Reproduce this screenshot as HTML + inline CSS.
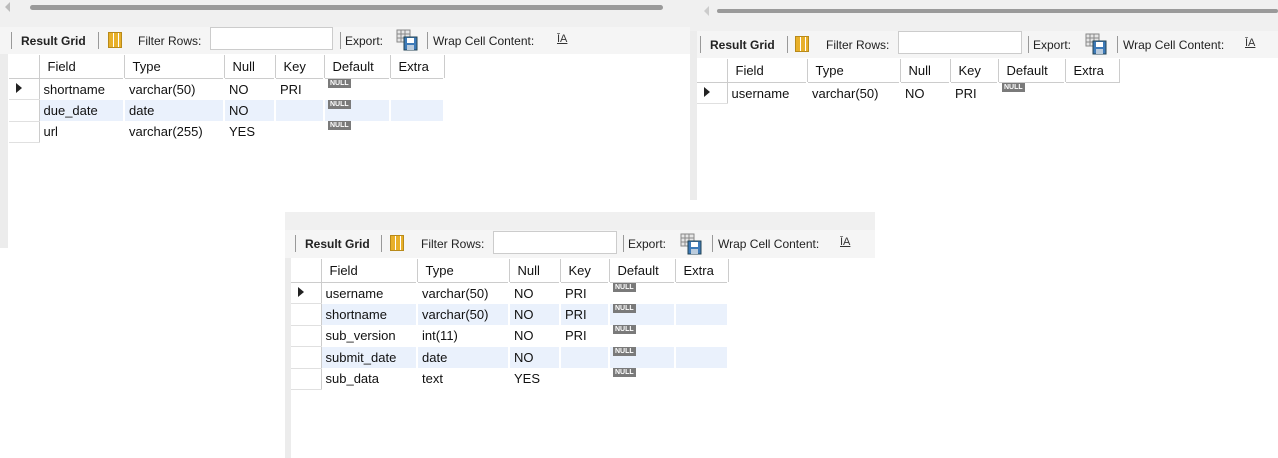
<!DOCTYPE html>
<html><head><meta charset="utf-8"><style>
*{margin:0;padding:0;box-sizing:border-box}
body{width:1278px;height:458px;background:#fff;position:relative;overflow:hidden;font-family:"Liberation Sans",sans-serif;color:#111}
.p{position:absolute;background:#fff}
.strip{position:absolute;left:0;top:0;bottom:0;background:#ececec}
.top{position:absolute;left:0;right:0;top:0;background:#f0f0f0}
.tb{position:absolute;left:0;right:0;background:#f5f5f5;font-size:12px;color:#222}
.tb span{position:absolute;white-space:nowrap}
.sep{position:absolute;width:1px;height:17px;background:#999}
.fin{position:absolute;height:23px;background:#fff;border:1px solid #ccc}
.g{position:absolute;border-collapse:collapse;font-size:13px;table-layout:fixed}
.g td{height:21.5px;padding:0 0 0 4px;white-space:nowrap;border-right:2px solid #fff;vertical-align:middle;position:relative}
.g tr.h td{height:23px;border-right:1px solid #ccc;border-bottom:1px solid #ccc;padding-left:8px}
.g td.rh{border-right:1px solid #ccc;border-bottom:1px solid #e0e0e0;padding:0}
.g tr.alt td{background:#eaf1fc}
.g tr.alt td.rh{background:#fff}
.nl{position:absolute;left:3px;top:0px;background:#7a7a7a;color:#fff;font-size:7px;font-weight:bold;padding:0 2px;line-height:9px}
.arr{display:inline-block;margin-left:7px;width:0;height:0;border-left:6px solid #222;border-top:5px solid transparent;border-bottom:5px solid transparent}
.sb{position:absolute;height:5px;background:#9a9a9a;border-radius:3px}
.ico{position:absolute;width:14px;height:16px;background:repeating-linear-gradient(90deg,#e8b02a 0 4px,#fff 4px 5px);border:1px solid #b88a1a}
.ex{position:absolute;width:22px;height:22px}
</style></head><body>

<!-- Panel 1 -->
<div class="p" style="left:0;top:0;width:690px;height:248px">
 <div class="top" style="height:28px"></div>
 <div style="position:absolute;left:5px;top:2px;width:0;height:0;border-right:5px solid #bbb;border-top:5px solid transparent;border-bottom:5px solid transparent"></div>
 <div class="sb" style="left:30px;top:5px;width:633px"></div>
 <div class="tb" style="top:27px;height:27px">
  <div class="sep" style="left:11px;top:5px"></div>
  <span style="left:21px;top:7px;font-weight:bold">Result Grid</span>
  <div class="sep" style="left:98px;top:5px"></div>
  <div class="ico" style="left:108px;top:5px"></div>
  <span style="left:138px;top:7px">Filter Rows:</span>
  <div class="fin" style="left:210px;top:0;width:123px"></div>
  <div class="sep" style="left:340px;top:5px"></div>
  <span style="left:345px;top:7px">Export:</span>
  <svg class="ex" style="left:396px;top:2px" viewBox="0 0 22 22"><rect x="1" y="1" width="13" height="12" fill="#e6e6e6" stroke="#888"/><path d="M1 5h13M1 9h13M5 1v12M9 1v12" stroke="#888"/><rect x="8" y="8" width="13" height="13" fill="#3d7ab8" stroke="#245"/><rect x="11" y="9" width="7" height="5" fill="#fff"/><rect x="11" y="16" width="7" height="5" fill="#bcd"/></svg>
  <div class="sep" style="left:427px;top:5px"></div>
  <span style="left:433px;top:7px">Wrap Cell Content:</span>
  <span style="left:557px;top:6px;font-size:11px;text-decoration:underline;color:#333">ĪA</span>
 </div>
 <div class="strip" style="width:8px;top:54px"></div>
 <table class="g" style="left:9px;top:55px;width:435px">
  <colgroup><col style="width:30px"><col style="width:85px"><col style="width:100px"><col style="width:51px"><col style="width:49px"><col style="width:66px"><col style="width:54px"></colgroup>
  <tr class="h"><td class="rh"></td><td>Field</td><td>Type</td><td>Null</td><td>Key</td><td>Default</td><td>Extra</td></tr>
  <tr><td class="rh"><span class="arr"></span></td><td>shortname</td><td>varchar(50)</td><td>NO</td><td>PRI</td><td><span class="nl">NULL</span></td><td></td></tr>
  <tr class="alt"><td class="rh"></td><td>due_date</td><td>date</td><td>NO</td><td></td><td><span class="nl">NULL</span></td><td></td></tr>
  <tr><td class="rh"></td><td>url</td><td>varchar(255)</td><td>YES</td><td></td><td><span class="nl">NULL</span></td><td></td></tr>
 </table>
</div>

<!-- Panel 2 -->
<div class="p" style="left:690px;top:0;width:588px;height:200px">
 <div class="top" style="height:31px"></div>
 <div style="position:absolute;left:14px;top:6px;width:0;height:0;border-right:5px solid #ccc;border-top:5px solid transparent;border-bottom:5px solid transparent"></div>
 <div class="sb" style="left:27px;top:9px;width:561px;height:4px"></div>
 <div class="tb" style="top:31px;height:27px">
  <div class="sep" style="left:10px;top:5px"></div>
  <span style="left:20px;top:7px;font-weight:bold">Result Grid</span>
  <div class="sep" style="left:97px;top:5px"></div>
  <div class="ico" style="left:105px;top:5px"></div>
  <span style="left:136px;top:7px">Filter Rows:</span>
  <div class="fin" style="left:208px;top:0;width:124px"></div>
  <div class="sep" style="left:338px;top:5px"></div>
  <span style="left:343px;top:7px">Export:</span>
  <svg class="ex" style="left:395px;top:2px" viewBox="0 0 22 22"><rect x="1" y="1" width="13" height="12" fill="#e6e6e6" stroke="#888"/><path d="M1 5h13M1 9h13M5 1v12M9 1v12" stroke="#888"/><rect x="8" y="8" width="13" height="13" fill="#3d7ab8" stroke="#245"/><rect x="11" y="9" width="7" height="5" fill="#fff"/><rect x="11" y="16" width="7" height="5" fill="#bcd"/></svg>
  <div class="sep" style="left:427px;top:5px"></div>
  <span style="left:433px;top:7px">Wrap Cell Content:</span>
  <span style="left:555px;top:6px;font-size:11px;text-decoration:underline;color:#333">ĪA</span>
 </div>
 <div class="strip" style="width:7px;top:31px"></div>
 <table class="g" style="left:7px;top:59px;width:422px">
  <colgroup><col style="width:30px"><col style="width:80px"><col style="width:93px"><col style="width:50px"><col style="width:48px"><col style="width:67px"><col style="width:54px"></colgroup>
  <tr class="h"><td class="rh"></td><td>Field</td><td>Type</td><td>Null</td><td>Key</td><td>Default</td><td>Extra</td></tr>
  <tr><td class="rh"><span class="arr"></span></td><td>username</td><td>varchar(50)</td><td>NO</td><td>PRI</td><td><span class="nl">NULL</span></td><td style="border:0"></td></tr>
 </table>
</div>

<!-- Panel 3 -->
<div class="p" style="left:285px;top:212px;width:590px;height:246px">
 <div class="top" style="height:18px"></div>
 <div class="tb" style="top:18px;height:28px">
  <div class="sep" style="left:10px;top:5px"></div>
  <span style="left:20px;top:7px;font-weight:bold">Result Grid</span>
  <div class="sep" style="left:96px;top:5px"></div>
  <div class="ico" style="left:105px;top:5px"></div>
  <span style="left:136px;top:7px">Filter Rows:</span>
  <div class="fin" style="left:208px;top:1px;width:124px"></div>
  <div class="sep" style="left:338px;top:5px"></div>
  <span style="left:343px;top:7px">Export:</span>
  <svg class="ex" style="left:395px;top:3px" viewBox="0 0 22 22"><rect x="1" y="1" width="13" height="12" fill="#e6e6e6" stroke="#888"/><path d="M1 5h13M1 9h13M5 1v12M9 1v12" stroke="#888"/><rect x="8" y="8" width="13" height="13" fill="#3d7ab8" stroke="#245"/><rect x="11" y="9" width="7" height="5" fill="#fff"/><rect x="11" y="16" width="7" height="5" fill="#bcd"/></svg>
  <div class="sep" style="left:427px;top:5px"></div>
  <span style="left:433px;top:7px">Wrap Cell Content:</span>
  <span style="left:555px;top:6px;font-size:11px;text-decoration:underline;color:#333">ĪA</span>
 </div>
 <div class="strip" style="width:6px;top:46px"></div>
 <table class="g" style="left:6px;top:47px;width:437px">
  <colgroup><col style="width:30px"><col style="width:96px"><col style="width:92px"><col style="width:51px"><col style="width:49px"><col style="width:66px"><col style="width:53px"></colgroup>
  <tr class="h"><td class="rh"></td><td>Field</td><td>Type</td><td>Null</td><td>Key</td><td>Default</td><td>Extra</td></tr>
  <tr><td class="rh"><span class="arr"></span></td><td>username</td><td>varchar(50)</td><td>NO</td><td>PRI</td><td><span class="nl">NULL</span></td><td></td></tr>
  <tr class="alt"><td class="rh"></td><td>shortname</td><td>varchar(50)</td><td>NO</td><td>PRI</td><td><span class="nl">NULL</span></td><td></td></tr>
  <tr><td class="rh"></td><td>sub_version</td><td>int(11)</td><td>NO</td><td>PRI</td><td><span class="nl">NULL</span></td><td></td></tr>
  <tr class="alt"><td class="rh"></td><td>submit_date</td><td>date</td><td>NO</td><td></td><td><span class="nl">NULL</span></td><td></td></tr>
  <tr><td class="rh"></td><td>sub_data</td><td>text</td><td>YES</td><td></td><td><span class="nl">NULL</span></td><td></td></tr>
 </table>
</div>
</body></html>
